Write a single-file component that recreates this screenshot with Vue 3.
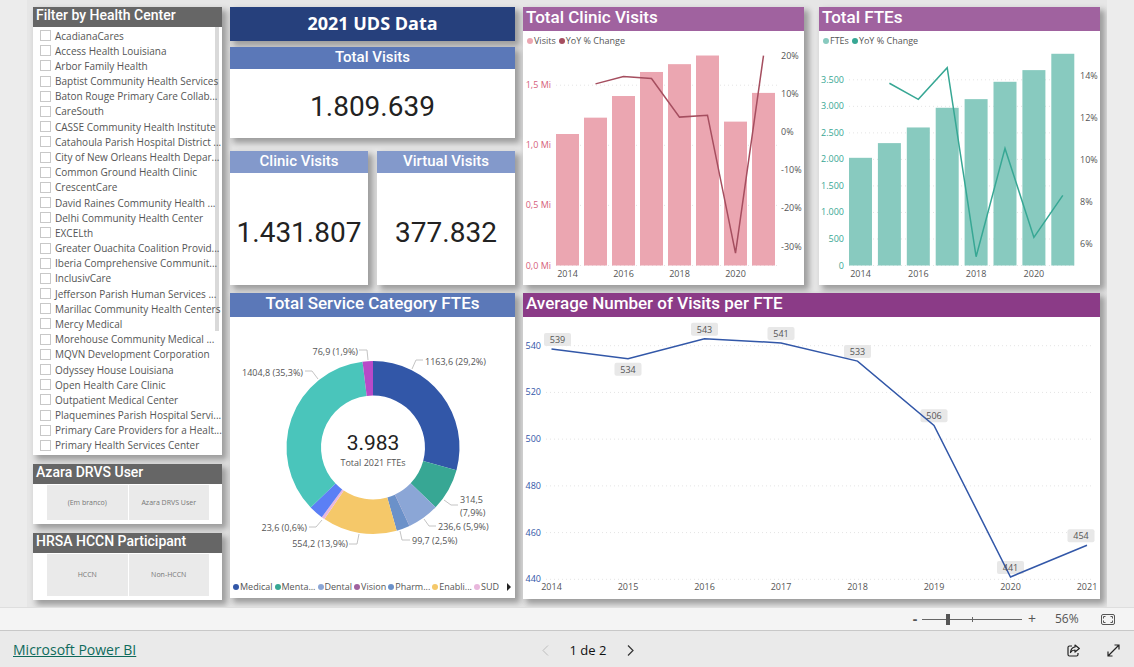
<script setup>
import { ref } from 'vue'

const centers = [
  'AcadianaCares', 'Access Health Louisiana', 'Arbor Family Health', 'Baptist Community Health Services',
  'Baton Rouge Primary Care Collab...', 'CareSouth', 'CASSE Community Health Institute',
  'Catahoula Parish Hospital District ...', 'City of New Orleans Health Depar...', 'Common Ground Health Clinic',
  'CrescentCare', 'David Raines Community Health ...', 'Delhi Community Health Center', 'EXCELth',
  'Greater Ouachita Coalition Provid...', 'Iberia Comprehensive Communit...', 'InclusivCare',
  'Jefferson Parish Human Services ...', 'Marillac Community Health Centers', 'Mercy Medical',
  'Morehouse Community Medical ...', 'MQVN Development Corporation', 'Odyssey House Louisiana',
  'Open Health Care Clinic', 'Outpatient Medical Center', 'Plaquemines Parish Hospital Servi...',
  'Primary Care Providers for a Healt...', 'Primary Health Services Center',
]
const slicers = [
  { title: 'Azara DRVS User', options: ['(Em branco)', 'Azara DRVS User'] },
  { title: 'HRSA HCCN Participant', options: ['HCCN', 'Non-HCCN'] },
]
const zoom = ref(25)

const points = (list) => list.map((p) => p.join(',')).join(' ')
const years = ['2014', '2015', '2016', '2017', '2018', '2019', '2020', '2021']

function comboChart(o) {
  const center = (i) => o.left + i * o.pitch + o.bar / 2
  return {
    ...o,
    bars: o.values.map((v, i) => ({ x: o.left + i * o.pitch, y: o.base - v * o.scale, h: v * o.scale })),
    grid: o.ticks.map(([v, label]) => ({ y: o.base - v * o.scale, label })),
    right: o.percentTicks.map((p) => ({ y: o.zero - p * o.percentScale, label: p + '%' })),
    line: points(o.percents.map((p, i) => [center(i + 1), o.zero - p * o.percentScale])),
    labels: [0, 2, 4, 6].map((i) => ({ x: center(i), label: years[i] })),
  }
}
const combos = [
  comboChart({
    title: 'Total Clinic Visits', tone: 'pink', series: ['Visits', 'YoY % Change'],
    left: 33, pitch: 28, bar: 23, base: 217.5, scale: 120.2,
    values: [1.094, 1.23, 1.41, 1.61, 1.675, 1.747, 1.197, 1.436],
    ticks: [[0, '0,0 Mi'], [0.5, '0,5 Mi'], [1, '1,0 Mi'], [1.5, '1,5 Mi']], tickX: 28,
    zero: 84, percentScale: 3.82, percents: [12.6, 14.5, 14, 3.9, 4.4, -31.7, 20],
    percentTicks: [20, 10, 0, -10, -20, -30], rightX: 258,
  }),
  comboChart({
    title: 'Total FTEs', tone: 'green', series: ['FTEs', 'YoY % Change'],
    left: 30, pitch: 28.9, bar: 23, base: 217.5, scale: 0.05305,
    values: [2030, 2307, 2602, 2973, 3136, 3463, 3683, 3991],
    ticks: [[0, '0'], [500, '500'], [1000, '1.000'], [1500, '1.500'], [2000, '2.000'], [2500, '2.500'], [3000, '3.000'], [3500, '3.500']], tickX: 25,
    zero: 322.8, percentScale: 21.08, percents: [13.64, 12.88, 14.38, 5.41, 10.55, 6.33, 8.32],
    percentTicks: [14, 12, 10, 8, 6], rightX: 261,
  }),
]

const avgY = (v) => 28.7 + (540 - v) * 2.336
const avg = [538.6, 534.4, 543, 541.2, 533.4, 505.9, 441, 454.6].map((v, i) => {
  const x = 28.5 + i * 76.5
  return {
    x, y: avgY(v), year: years[i], label: ['539', '534', '543', '541', '533', '506', '441', '454'][i],
    bx: x + (i === 0 ? 6 : i === 7 ? -6 : 0), by: avgY(v) + (i === 1 ? 4 : -16),
  }
})
const avgTicks = [540, 520, 500, 480, 460, 440]

const parts = [
  [1163.6, '#3257a8'], [314.5, '#37a794'], [236.6, '#8ba6d6'], [1, '#a0629f'], [99.7, '#6b91c9'],
  [554.2, '#f5c869'], [23.6, '#e8b7dc'], [108, '#5b7ff5'], [1404.8, '#4ac5bb'], [76.9, '#b84ac8'],
]
const sum = parts.reduce((a, p) => a + p[0], 0)
let turned = 0
const slices = parts.map(([value, color]) => {
  const a = (turned / sum) * 2 * Math.PI
  turned += value
  const b = (turned / sum) * 2 * Math.PI
  const at = (r, t) => `${143 + r * Math.sin(t)} ${130.5 - r * Math.cos(t)}`
  const large = b - a > Math.PI ? 1 : 0
  return { color, d: `M${at(86.5, a)}A86.5 86.5 0 ${large} 1 ${at(86.5, b)}L${at(52, b)}A52 52 0 ${large} 0 ${at(52, a)}Z` }
})
const callouts = [
  { x: 128, y: 35, end: true, text: '76,9 (1,9%)', line: '129,33 137,33 138,43' },
  { x: 195, y: 45, text: '1163,6 (29,2%)', line: '182,52 186,43 193,43' },
  { x: 73, y: 56, end: true, text: '1404,8 (35,3%)', line: '75,54 82,54 88,62' },
  { x: 230, y: 183, text: '314,5', line: '214,183 221,188 228,188' },
  { x: 230, y: 196, text: '(7,9%)', line: '' },
  { x: 208, y: 210, text: '236,6 (5,9%)', line: '194,202 199,209 206,209' },
  { x: 182, y: 224, text: '99,7 (2,5%)', line: '170,214 172,223 180,223' },
  { x: 118, y: 227, end: true, text: '554,2 (13,9%)', line: '119,227 127,227 129,217' },
  { x: 77, y: 211, end: true, text: '23,6 (0,6%)', line: '79,210 86,210 92,203' },
]
const categories = [
  ['Medical', '#3257a8'], ['Menta...', '#37a794'], ['Dental', '#8ba6d6'], ['Vision', '#a0629f'],
  ['Pharm...', '#6b91c9'], ['Enabli...', '#f5c869'], ['SUD', '#e8b7dc'],
]
</script>

<template>
  <div class="viewer">
    <main class="canvas">
      <aside class="col filters">
        <section class="card centers">
          <h2 class="bar gray">Filter by Health Center</h2>
          <ul>
            <li v-for="name in centers" :key="name">
              <label><input type="checkbox" /><span>{{ name }}</span></label>
            </li>
          </ul>
          <div class="thumb"></div>
        </section>
        <section v-for="s in slicers" :key="s.title" class="card slicer">
          <h2 class="bar gray">{{ s.title }}</h2>
          <div class="tiles">
            <button v-for="o in s.options" :key="o" type="button">{{ o }}</button>
          </div>
        </section>
      </aside>

      <div class="col totals">
        <h1 class="banner">2021 UDS Data</h1>
        <section class="card kpi">
          <h2 class="bar blue">Total Visits</h2>
          <p>1.809.639</p>
        </section>
        <div class="pair">
          <section class="card kpi">
            <h2 class="bar light">Clinic Visits</h2>
            <p>1.431.807</p>
          </section>
          <section class="card kpi">
            <h2 class="bar light">Virtual Visits</h2>
            <p>377.832</p>
          </section>
        </div>
        <section class="card">
          <h2 class="bar big blue mid">Total Service Category FTEs</h2>
          <svg class="chart" viewBox="0 0 285 261" role="img" aria-label="Total Service Category FTEs">
            <path v-for="s in slices" :key="s.color" :d="s.d" :fill="s.color" />
            <g v-for="c in callouts" :key="c.text">
              <polyline :points="c.line" class="leader" />
              <text :x="c.x" :y="c.y + 3" :class="{ end: c.end }">{{ c.text }}</text>
            </g>
            <text x="143" y="133" class="mid hub">3.983</text>
            <text x="143" y="149" class="mid">Total 2021 FTEs</text>
          </svg>
          <div class="legend cats">
            <span v-for="[name, color] in categories" :key="name"><i :style="{ background: color }"></i>{{ name }}</span>
            <button type="button" class="more" aria-label="More categories">
              <svg width="4" height="8" viewBox="0 0 4 8"><path d="M0 0L4 4L0 8Z" fill="#222" /></svg>
            </button>
          </div>
        </section>
      </div>

      <div class="col trends">
        <div class="pair wide">
          <section v-for="c in combos" :key="c.title" class="card" :class="c.tone">
            <h2 class="bar big violet">{{ c.title }}</h2>
            <div class="legend">
              <span><i class="dot-bar"></i>{{ c.series[0] }}</span>
              <span><i class="dot-line"></i>{{ c.series[1] }}</span>
            </div>
            <svg class="chart" viewBox="0 0 281 237" role="img" :aria-label="c.title">
              <g v-for="g in c.grid" :key="g.label">
                <line :x1="c.left" x2="257" :y1="g.y" :y2="g.y" class="grid" />
                <text :x="c.tickX" :y="g.y + 3" class="end tick">{{ g.label }}</text>
              </g>
              <rect v-for="b in c.bars" :key="b.x" :x="b.x" :y="b.y" :width="c.bar" :height="b.h" class="column" />
              <polyline :points="c.line" class="line" />
              <text v-for="r in c.right" :key="r.label" :x="c.rightX" :y="r.y + 3">{{ r.label }}</text>
              <text v-for="l in c.labels" :key="l.label" :x="l.x" y="229" class="mid">{{ l.label }}</text>
            </svg>
          </section>
        </div>
        <section class="card navy">
          <h2 class="bar big plum">Average Number of Visits per FTE</h2>
          <svg class="chart" viewBox="0 0 577 282" role="img" aria-label="Average Number of Visits per FTE">
            <g v-for="t in avgTicks" :key="t">
              <line x1="23" x2="571" :y1="avgY(t)" :y2="avgY(t)" class="grid" />
              <text x="18" :y="avgY(t) + 3" class="end tick">{{ t }}</text>
            </g>
            <rect v-for="p in avg" :key="p.year" :x="p.bx - 13.5" :y="p.by" width="27" height="13" rx="2" class="tag" />
            <polyline :points="points(avg.map((p) => [p.x, p.y]))" class="line" />
            <g v-for="p in avg" :key="p.year">
              <text :x="p.bx" :y="p.by + 10" class="mid">{{ p.label }}</text>
              <text :x="p.x" y="273" class="mid">{{ p.year }}</text>
            </g>
          </svg>
        </section>
      </div>
    </main>

    <div class="zoombar">
      <button type="button" class="sign minus" aria-label="Zoom out">-</button>
      <div class="slider">
        <input v-model="zoom" type="range" min="0" max="100" aria-label="Zoom level" />
      </div>
      <button type="button" class="sign" aria-label="Zoom in">+</button>
      <output>56%</output>
      <button type="button" aria-label="Fit to page">
        <svg width="14" height="11" viewBox="0 0 14 11" fill="none" stroke="#555">
          <rect x=".5" y=".5" width="13" height="10" rx="1.5" />
          <path d="M4.5 2.5H2.5V4.5M9.5 2.5H11.5V4.5M4.5 8.5H2.5V6.5M9.5 8.5H11.5V6.5" />
        </svg>
      </button>
    </div>

    <footer>
      <div class="brand"><a href="#">Microsoft Power BI</a></div>
      <nav>
        <button type="button" disabled aria-label="Previous page">
          <svg width="7" height="11" viewBox="0 0 7 11" fill="none" stroke="#bdbdbd"><path d="M6 .5L1 5.5L6 10.5" /></svg>
        </button>
        <span>1 de 2</span>
        <button type="button" aria-label="Next page">
          <svg width="7" height="11" viewBox="0 0 7 11" fill="none" stroke="#333" stroke-width="1.2"><path d="M1 .5L6 5.5L1 10.5" /></svg>
        </button>
      </nav>
      <div class="actions">
        <button type="button" aria-label="Share">
          <svg width="13" height="13" viewBox="0 0 13 13" fill="none" stroke="#222" stroke-width="1.2" stroke-linejoin="round">
            <path d="M5 2H2.5Q1 2 1 3.500V10.500Q1 12 2.500 12H9.500Q11 12 11 10.500V9" />
            <path d="M8 1L12.300 4.500L8 8V6Q5 6 3.500 8.500Q4 3.500 8 3Z" />
          </svg>
        </button>
        <button type="button" aria-label="Full screen">
          <svg width="13" height="13" viewBox="0 0 13 13" fill="none" stroke="#222" stroke-width="1.2">
            <path d="M1 12L12 1M7.500 1H12V5.500M1 7.500V12H5.500" />
          </svg>
        </button>
      </div>
    </footer>
  </div>
</template>

<style>
body {
  background: #eaeaea;
}
</style>

<style scoped>
.viewer {
  background: #ececec;
  color: #555;
  font: 9px/12px "Open Sans", "Noto Sans", sans-serif;
}
.canvas {
  margin: 0 27px;
  padding: 7px 7px 7px 6px;
  background: #e6e6e6;
  display: grid;
  grid-template-columns: 189fr 285fr 577fr;
  gap: 8px;
  overflow: hidden;
}
.col {
  display: flex;
  flex-direction: column;
  min-width: 0;
}
.filters {
  gap: 9px;
}
.trends {
  gap: 8px;
}
.card,
.banner {
  position: relative;
  box-shadow: 4px 4px 6px 1px rgba(0, 0, 0, 0.32);
  min-width: 0;
}
.card {
  background: #fff;
}
h1, h2, p, ul {
  margin: 0;
  padding: 0;
}
button {
  border: 0;
  padding: 0;
  background: none;
  color: inherit;
  font: inherit;
  display: flex;
  align-items: center;
  justify-content: center;
}
svg {
  display: block;
}
.banner {
  background: #26407c;
  color: #fff;
  font: 700 18px/32px "Open Sans", sans-serif;
  padding-bottom: 2px;
  text-align: center;
}
.bar {
  color: #fff;
  font: 500 14px/17px Roboto, sans-serif;
  padding: 0 3px 3px;
}
.bar.big {
  font-size: 17px;
  line-height: 21px;
}
.gray { background: #666; }
.blue { background: #5b78b8; }
.light { background: #8399cb; }
.violet { background: #a0629f; }
.plum { background: #8b3b87; }
h2.mid {
  text-align: center;
}

.centers ul {
  list-style: none;
  height: 425px;
  margin: 1px 0 2px;
  padding-left: 7px;
  display: grid;
  grid-auto-rows: 1fr;
}
.centers label {
  display: flex;
  align-items: center;
  gap: 4px;
  white-space: nowrap;
  height: 100%;
  position: relative;
  z-index: 1;
  font-size: 10px;
}
.centers input {
  appearance: none;
  width: 11px;
  height: 11px;
  margin: 0;
  border: 1px solid #c8c8c8;
  background: #fff;
}
.thumb {
  position: absolute;
  top: 20px;
  right: 3px;
  width: 4px;
  height: 304px;
  background: #d9d9d9;
}
.tiles {
  display: grid;
  grid-template-columns: 1fr 1fr;
  gap: 1px;
  padding: 1px 13px 4px 14px;
}
.tiles button {
  height: 35px;
  background: #eaeaea;
  color: #777;
  font-size: 7px;
}
.slicer:last-child button {
  height: 42px;
}

.kpi {
  display: flex;
  flex-direction: column;
}
.kpi .bar {
  text-align: center;
  font-size: 15px;
  line-height: 20px;
  padding-bottom: 2px;
}
.totals > .kpi {
  height: 91px;
  margin: 6px 0 13px;
}
.kpi p {
  flex: 1;
  display: flex;
  align-items: center;
  justify-content: center;
  color: #222;
  font: 28px/32px Roboto, sans-serif;
  padding-top: 7px;
}
.pair {
  display: grid;
  grid-template-columns: 1fr 1fr;
  gap: 9px;
}
.totals .pair {
  height: 134px;
  margin-bottom: 8px;
}
.pair.wide {
  gap: 15px;
}

.legend {
  display: flex;
  gap: 3px;
  padding: 4px 4px 1px;
  white-space: nowrap;
}
.legend span {
  display: flex;
  align-items: center;
  gap: 1px;
}
.legend i {
  width: 6px;
  height: 6px;
  border-radius: 50%;
}
.cats {
  gap: 2px;
  padding: 3px 4px 5px 3px;
}
.more {
  margin-left: auto;
}
.chart {
  width: 100%;
}
.chart text {
  fill: #555;
}
.chart .mid { text-anchor: middle; }
.chart .end { text-anchor: end; }
.chart .hub {
  fill: #222;
  font: 21px Roboto, sans-serif;
}
.leader {
  fill: none;
  stroke: #c4c4c4;
}
.grid {
  stroke: #e4e4e4;
  stroke-dasharray: 1 3;
}
.line {
  fill: none;
  stroke-width: 1.5;
}
.tag { fill: #e8e8e8; }
.pink .column { fill: #eba6b1; }
.pink .line { stroke: #a54e5f; }
.chart .tick { fill: #37a794; }
.pink .chart .tick { fill: #d6617c; }
.navy .chart .tick { fill: #3257a8; }
.pink .dot-bar { background: #eba6b1; }
.pink .dot-line { background: #a54e5f; }
.green .column { fill: #88cabf; }
.green .line { stroke: #37a794; }
.green .chart .tick { fill: #37a794; }
.green .dot-bar { background: #88cabf; }
.green .dot-line { background: #37a794; }
.navy .line { stroke: #3257a8; }

.zoombar {
  display: flex;
  align-items: center;
  justify-content: flex-end;
  height: 22px;
  padding-right: 19px;
  background: #f4f4f4;
  border-top: 1px solid #dedede;
  font-size: 12px;
}
.sign {
  width: 14px;
  font-size: 14px;
}
.minus {
  width: 8px;
  font-weight: 700;
}
.slider {
  width: 100px;
  margin: 0 3px;
  background: linear-gradient(#666, #666) center / 1px 5px no-repeat;
}
.slider input {
  display: block;
  appearance: none;
  width: 100%;
  height: 11px;
  margin: 0;
  background: linear-gradient(#666, #666) center / 100% 1px no-repeat;
}
.slider input::-webkit-slider-thumb {
  appearance: none;
  width: 4px;
  height: 11px;
  background: #555;
}
output {
  width: 23px;
  margin: 0 23px 0 16px;
}
footer {
  display: grid;
  grid-template-columns: 1fr auto 1fr;
  align-items: center;
  height: 37px;
  padding: 2px 14px 0 13px;
  box-sizing: border-box;
  background: #eaeaea;
  border-top: 1px solid #c8c8c8;
}
.brand a {
  color: #0f6a5c;
  font-size: 14px;
  line-height: 20px;
}
nav {
  display: flex;
  align-items: center;
  gap: 21px;
  color: #111;
  font-size: 13px;
  margin-left: 43px;
}
.actions {
  display: flex;
  justify-content: flex-end;
  gap: 27px;
}
</style>
